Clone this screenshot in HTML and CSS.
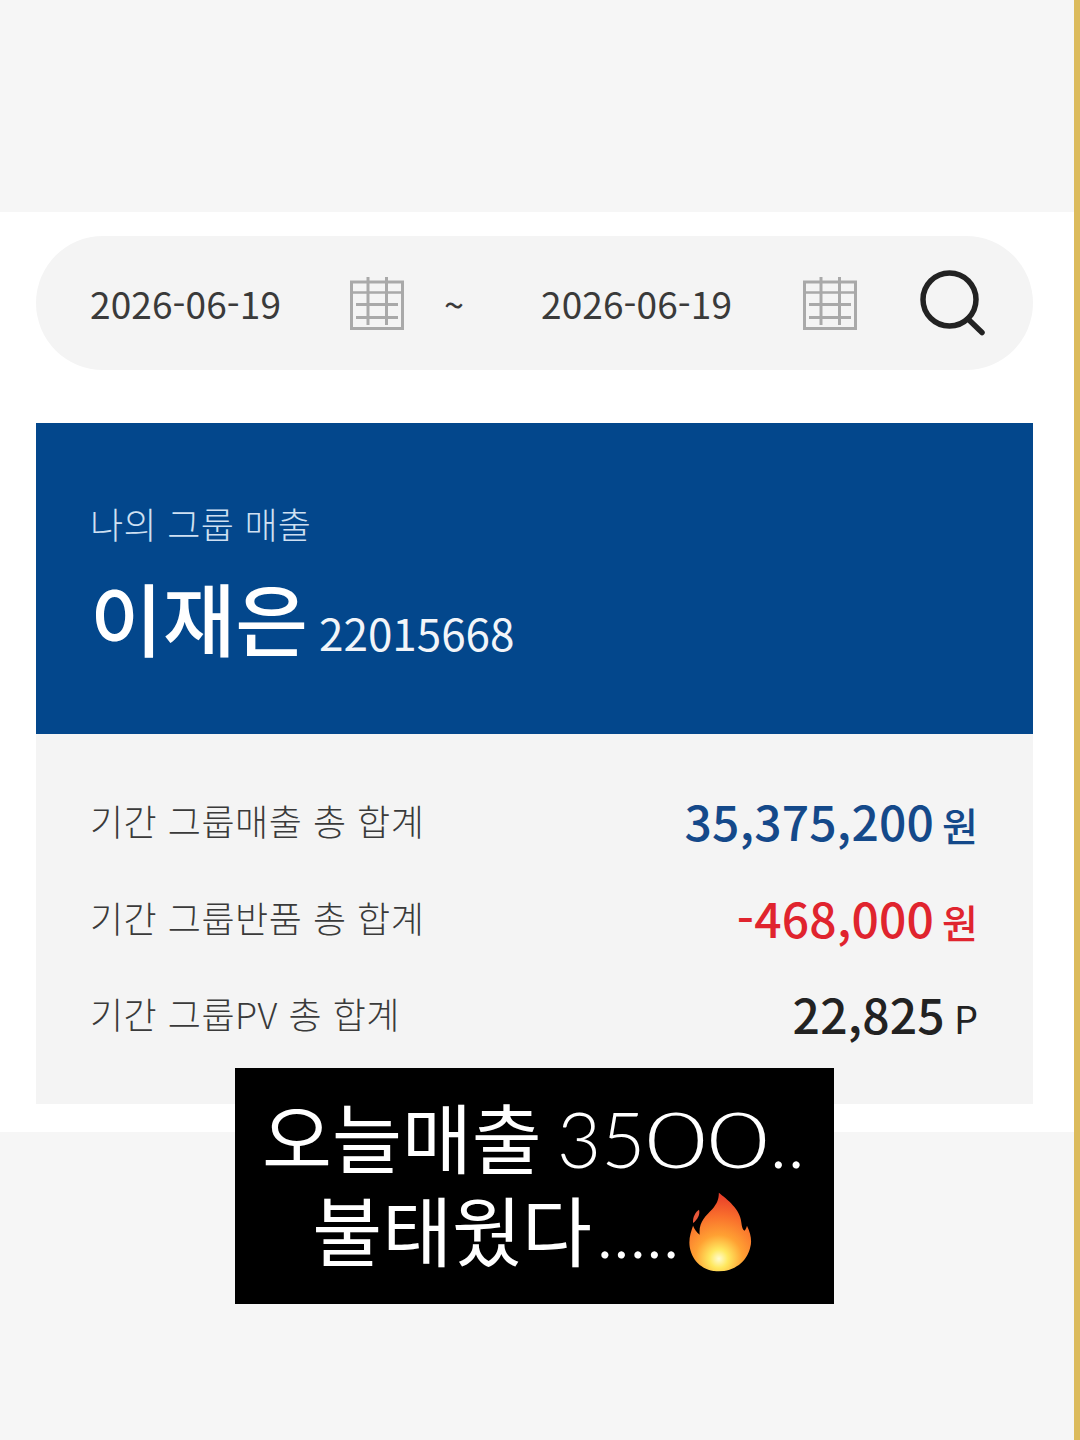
FILE: index.html
```html
<!DOCTYPE html>
<html lang="ko">
<head>
<meta charset="utf-8">
<title>나의 그룹 매출</title>
<link rel="stylesheet" href="styles.css">
</head>
<body>
<div class="page">
  <div class="top-band"></div>
  <main class="sheet">
    <form class="search-bar">
      <span class="date">2026-06-19</span>
      <svg class="cal" viewBox="0 0 54 54"><g fill="none" stroke="#a9a9a9" stroke-width="3"><rect x="1.5" y="6" width="51" height="46.5"/><path d="M1.5 16.5H52.5" stroke-width="2.500"/><path d="M6 28.5H48M6 41.500H48" stroke-width="3"/><path d="M18 1V49M36.500 1V49" stroke-width="3"/></g></svg>
      <span class="tilde">~</span>
      <span class="date date-end">2026-06-19</span>
      <svg class="cal cal-end" viewBox="0 0 54 54"><g fill="none" stroke="#a9a9a9" stroke-width="3"><rect x="1.500" y="6" width="51" height="46.5"/><path d="M1.5 16.5H52.5" stroke-width="2.500"/><path d="M6 28.5H48M6 41.500H48" stroke-width="3"/><path d="M18 1V49M36.500 1V49" stroke-width="3"/></g></svg>
      <svg class="magnifier" viewBox="0 0 66 66"><circle cx="29.500" cy="29.500" r="26.500" fill="none" stroke="#222" stroke-width="5.500"/><path d="M48 49L62 62.500" fill="none" stroke="#222" stroke-width="5.500" stroke-linecap="round"/></svg>
    </form>
    <section class="hero">
      <div class="hero-title">나의 그룹 매출</div>
      <div class="hero-name"><span class="name">이재은</span><span class="member-id">22015668</span></div>
    </section>
    <section class="totals">
      <div class="row"><span class="label">기간 그룹매출 총 합계</span><span class="value blue">35,375,200<small class="unit">원</small></span></div>
      <div class="row"><span class="label">기간 그룹반품 총 합계</span><span class="value red">-468,000<small class="unit">원</small></span></div>
      <div class="row"><span class="label">기간 그룹PV 총 합계</span><span class="value dark">22,825<small class="unit unit-p">P</small></span></div>
    </section>
  </main>
  <div class="caption">
    <div class="cap-line cap-first">오늘매출 <span class="cap-num cap-amount">35<span class="zero">0</span><span class="zero">0</span>..</span></div>
    <div class="cap-line cap-second">불태웠다<span class="cap-num cap-dots">.....</span><svg class="flame" viewBox="50 38 190 242"><defs><radialGradient id="fl" gradientUnits="userSpaceOnUse" cx="140" cy="240" r="200"><stop offset="0" stop-color="#fffbd0"/><stop offset=".14" stop-color="#ffe85f"/><stop offset=".36" stop-color="#ffa133"/><stop offset=".65" stop-color="#f96f2c"/><stop offset="1" stop-color="#e6392a"/></radialGradient></defs><path fill="url(#fl)" d="M140 40C165 60 205 90 208 130C210 145 212 152 218 155C222 150 224 145 225 140C238 165 240 190 235 205C225 250 185 278 140 278C95 278 60 250 52 205C48 180 55 160 62 140C66 150 72 160 82 167C78 130 100 110 120 90C135 72 140 60 140 40Z"/><path fill="#e9583a" d="M62 132C60 115 70 98 80 92C84 105 76 122 62 132Z"/></svg></div>
  </div>
  <div class="gold-edge"></div>
</div>
</body>
</html>
```

FILE: styles.css
```css
* { box-sizing: border-box; }
html, body { margin: 0; padding: 0; }
body { background: #f6f6f6; font-family: "Noto Sans CJK KR", "Noto Sans", sans-serif; }
.page { position: relative; width: 1080px; height: 1440px; overflow: hidden; background: #f6f6f6; }
.gold-edge { position: absolute; top: 0; right: 0; width: 6px; height: 1440px; background: #dcbb5c; }
.top-band { height: 212px; }
.sheet { width: 1074px; height: 920px; background: #fff; padding: 24px 41px 0 36px; }
.search-bar { display: flex; align-items: center; height: 134px; border-radius: 67px; background: #f4f4f4; padding-left: 54px; color: #3a3a3a; }
.date { font-size: 37px; line-height: 1; width: 190px; letter-spacing: .1px; white-space: nowrap; }
.cal { width: 54px; height: 54px; margin-left: 70px; flex: none; }
.tilde { font-size: 36px; line-height: 1; width: 20px; margin-left: 40px; }
.date-end { margin-left: 77px; }
.cal-end { margin-left: 72px; }
.magnifier { width: 66px; height: 66px; margin-left: 63px; flex: none; }
.hero { height: 311px; margin-top: 53px; background: #03478c; padding: 74px 54px 0; color: #fff; }
.hero-title { font-size: 36px; line-height: 52px; font-weight: 300; color: #cfe0f2; letter-spacing: .3px; }
.hero-name { display: flex; align-items: baseline; margin-top: 23px; }
.name { font-size: 79px; line-height: 90px; font-weight: 500; }
.member-id { font-size: 44px; line-height: 1; margin-left: 11px; color: #f2f5f9; }
.totals { height: 370px; background: #f4f4f4; padding: 38px 55px 0 54px; }
.row { display: flex; justify-content: space-between; align-items: center; height: 96.500px; }
.label { font-size: 36px; font-weight: 300; color: #3a3a3a; letter-spacing: .5px; }
.value { font-size: 48px; font-weight: 500; letter-spacing: .2px; line-height: 1; }
.unit { font-size: 39px; font-weight: 500; margin-left: 8px; letter-spacing: 0; }
.unit-p { font-size: 38px; font-weight: 400; margin-left: 9px; }
.blue { color: #14498a; }
.red { color: #e0242e; }
.dark { color: #222; }
.caption { position: absolute; left: 235px; top: 1068px; width: 599px; height: 236px; background: #000; color: #fff; text-align: center; font-size: 76px; font-weight: 400; padding-top: 23px; }
.cap-line { line-height: 89.500px; white-space: nowrap; }
.cap-first { padding-right: 2px; }
.cap-num { font-family: Lato, sans-serif; font-weight: 300; }
.cap-amount { margin-left: -6px; }
.cap-dots { letter-spacing: -1.200px; margin-left: 4px; }
.zero { display: inline-block; transform: scaleX(1.4); margin: 0 9px; }
.cap-second { display: flex; justify-content: center; align-items: center; padding-right: 5px; }
.flame { width: 63px; height: 80px; margin-left: 10px; margin-top: 8px; }
```
